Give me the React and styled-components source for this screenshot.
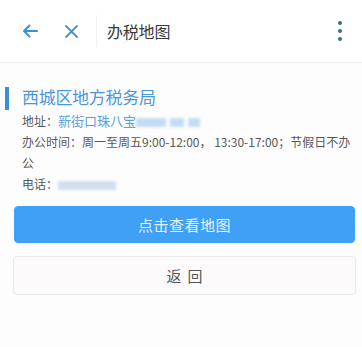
import React from "react";
import styled, { createGlobalStyle } from "styled-components";

const Global = createGlobalStyle`
  html, body { margin: 0; padding: 0; background: #fefdfd; }
  body { font-family: "Noto Sans CJK SC", "Noto Sans", sans-serif; }
`;

const Page = styled.div`
  width: 362px;
  height: 347px;
  background: #fefdfd;
  overflow: hidden;
`;

const Header = styled.header`
  display: flex;
  align-items: center;
  height: 62px;
  border-bottom: 1px solid #eeeeee;
  background: #ffffff;
`;

const IconButton = styled.div`
  display: flex;
  align-items: center;
  justify-content: center;
  width: ${(p) => p.$w}px;
  height: 40px;
  margin-left: ${(p) => p.$ml || 0}px;
`;

const Divider = styled.div`
  width: 1px;
  height: 32px;
  background: #f1f1f1;
  margin-left: 17px;
`;

const HeaderTitle = styled.h1`
  flex: 1;
  margin: 0 0 0 10px;
  font-size: 16px;
  font-weight: 400;
  color: #383838;
  letter-spacing: -0.2px;
`;

const Dots = styled.div`
  display: flex;
  flex-direction: column;
  gap: 4px;
  margin-right: 20px;
  span {
    width: 4px;
    height: 4px;
    border-radius: 50%;
    background: #3e6c86;
  }
`;

const Info = styled.section`
  padding: 24px 8px 0 5px;
`;

const Name = styled.div`
  height: 23px;
  border-left: 4px solid #3d8ed4;
  padding-left: 13px;
  font-size: 17px;
  line-height: 19px;
  color: #4b96db;
  letter-spacing: -0.3px;
`;

const Line = styled.div`
  padding-left: 17px;
  font-size: 12px;
  line-height: 21px;
  color: #585858;
`;

const Link = styled.span`
  color: #5a9fe0;
  font-size: 13px;
`;

const Blur = styled.span`
  display: inline-block;
  vertical-align: middle;
  width: ${(p) => p.$w}px;
  height: 9px;
  margin-left: ${(p) => p.$ml || 0}px;
  background: ${(p) => p.$c || "#c3dcf4"};
  filter: blur(1.5px);
`;

const Actions = styled.div`
  display: flex;
  flex-direction: column;
  gap: 13px;
  padding: 12px 7px 0 13px;
`;

const Button = styled.button`
  height: ${(p) => (p.$primary ? 37 : 39)}px;
  margin-left: ${(p) => (p.$primary ? 1 : 0)}px;
  margin-right: ${(p) => (p.$primary ? 0 : -1)}px;
  border: 1px solid ${(p) => (p.$primary ? "#3d9ff5" : "#ebe8e8")};
  border-radius: 4px;
  background: ${(p) => (p.$primary ? "#3fa0f6" : "#fcfafa")};
  color: ${(p) => (p.$primary ? "#e6f2ff" : "#555")};
  font-family: inherit;
  font-size: 15px;
  letter-spacing: ${(p) => (p.$primary ? "0.5px" : "6px")};
  padding: 0;
  text-indent: ${(p) => (p.$primary ? "0" : "6px")};
`;

export default function App() {
  return (
    <Page>
      <Global />
      <Header>
        <IconButton $w={20} $ml={20}>
          <svg width="18" height="16" viewBox="0 0 18 16">
            <path d="M16 8H3M8.5 2.5L3 8l5.5 5.5" fill="none" stroke="#3b8fd6" strokeWidth="2" strokeLinecap="round" strokeLinejoin="round" />
          </svg>
        </IconButton>
        <IconButton $w={16} $ml={23}>
          <svg width="15" height="15" viewBox="0 0 15 15">
            <path d="M2 2l11 11M13 2L2 13" fill="none" stroke="#4a8fd0" strokeWidth="1.8" strokeLinecap="round" />
          </svg>
        </IconButton>
        <Divider />
        <HeaderTitle>办税地图</HeaderTitle>
        <Dots>
          <span />
          <span />
          <span />
        </Dots>
      </Header>
      <Info>
        <Name>西城区地方税务局</Name>
        <Line>
          地址：<Link>新街口珠八宝</Link>
          <Blur $w={30} $ml={0} />
          <Blur $w={14} $ml={4} />
          <Blur $w={12} $ml={4} />
        </Line>
        <Line>办公时间：周一至周五9:00-12:00， 13:30-17:00；节假日不办公</Line>
        <Line>
          电话：<Blur $w={58} $c="#cfdff0" />
        </Line>
      </Info>
      <Actions>
        <Button $primary>点击查看地图</Button>
        <Button>返回</Button>
      </Actions>
    </Page>
  );
}
